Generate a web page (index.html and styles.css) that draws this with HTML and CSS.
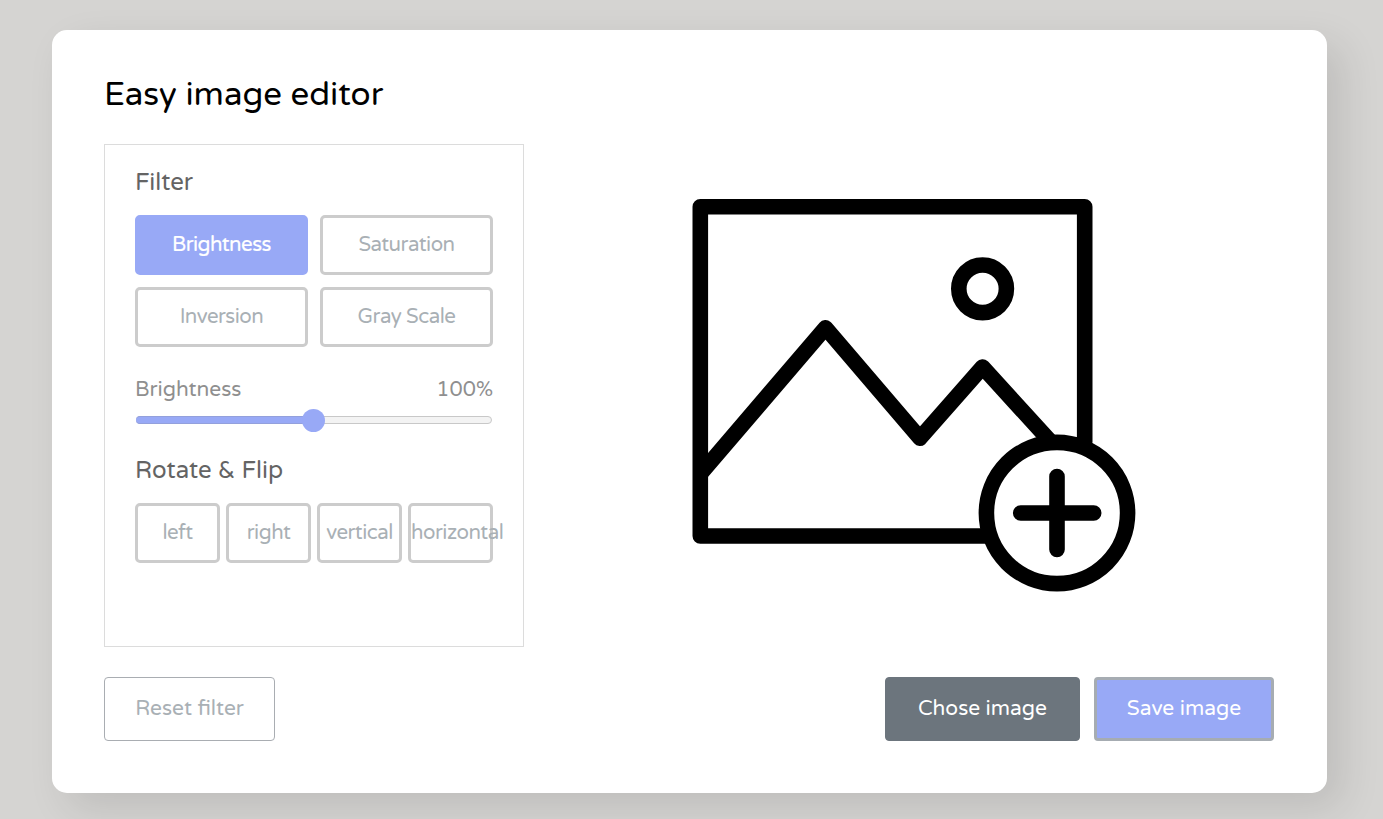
FILE: index.html
```html
<!DOCTYPE html>
<html lang="en">
<head>
<meta charset="utf-8">
<title>Easy image editor</title>
<link rel="stylesheet" href="styles.css">
</head>
<body>
<main class="container">
  <h2 class="title">Easy image editor</h2>
  <div class="wrapper">
    <section class="panel">
      <h3 class="label">Filter</h3>
      <div class="filters">
        <button class="option active">Brightness</button>
        <button class="option">Saturation</button>
        <button class="option">Inversion</button>
        <button class="option">Gray Scale</button>
      </div>
      <div class="slider">
        <div class="info"><span class="name">Brightness</span><span class="value">100%</span></div>
        <div class="track"><div class="fill"></div><div class="thumb"></div></div>
      </div>
      <h3 class="label rotate-label">Rotate &amp; Flip</h3>
      <div class="rotate">
        <button class="option">left</button>
        <button class="option">right</button>
        <button class="option">vertical</button>
        <button class="option horizontal">horizontal</button>
      </div>
    </section>
    <section class="preview">
      <svg class="picture" viewBox="692 198 444 395" width="444" height="395" fill="none" stroke="#000" stroke-width="15.6" stroke-linejoin="round" stroke-linecap="round">
        <path d="M1084.7 442V206.8H700.3V536H986"/>
        <path d="M700.3 474L825.5 327.8L920 438.2L982.6 367L1050 441" stroke-linecap="butt"/>
        <circle cx="982.6" cy="288.8" r="23.8"/>
        <circle cx="1057" cy="513" r="70.6" fill="#fff"/>
        <path d="M1020.7 513H1093.7M1057 476.5V549.5"/>
      </svg>
    </section>
  </div>
  <div class="controls">
    <button class="btn reset">Reset filter</button>
    <div class="row">
      <button class="btn choose">Chose image</button>
      <button class="btn save">Save image</button>
    </div>
  </div>
</main>
</body>
</html>
```
FILE: styles.css
```css
* { box-sizing: border-box; margin: 0; padding: 0; }
body {
  height: 819px;
  padding: 30px 56px 0 52px;
  overflow: hidden;
  background: #d5d4d2;
  font-family: "Varela Round", "Noto Sans", sans-serif;
}
button { font-family: inherit; }
.container {
  height: 763px;
  padding: 41px 53px 52px 52px;
  background: #fff;
  border-radius: 15px;
  box-shadow: 15px 15px 40px rgba(0, 0, 0, .11);
}
.title { height: 48px; line-height: 48px; font-size: 33px; font-weight: 400; color: #000; }
.wrapper { display: flex; height: 503px; margin-top: 25px; }
.panel { width: 420px; padding: 21px 30px; border: 1px solid #dcdcdc; }
.label { height: 34px; line-height: 34px; font-size: 24px; font-weight: 400; color: #646464; }
.filters { display: grid; grid-template-columns: 173px 173px; gap: 12px; margin-top: 15px; }
.option {
  height: 60px;
  padding: 0 0 2px;
  background: #fff;
  border: 3px solid #ccc;
  border-radius: 5px;
  color: #a9b0b5;
  font-size: 20.5px;
  letter-spacing: -.5px;
  white-space: nowrap;
}
.active { background: #98a9f6; border-color: #98a9f6; color: #fff; -webkit-text-stroke: .2px #fff; }
.slider { margin-top: 26px; }
.info { display: flex; justify-content: space-between; height: 34px; line-height: 34px; font-size: 21px; color: #8f8f8f; }
.track { position: relative; width: 356px; height: 8px; margin: 9px 0 0 1px; border: 1px solid #c8c8c8; border-radius: 4px; background: #f3f3f3; }
.fill { width: 178px; height: 8px; margin: -1px; border-radius: 4px 0 0 4px; background: #98a9f6; border-top: 1px solid #93a0dc; border-bottom: 1px solid #93a0dc; }
.thumb { position: absolute; left: 165px; top: -8.5px; width: 23px; height: 23px; border-radius: 50%; background: #98a9f6; }
.rotate-label { margin-top: 30px; }
.rotate { display: grid; grid-template-columns: repeat(4, 85px); gap: 6px; margin-top: 15px; }
.rotate .horizontal { text-align: left; }
.preview { display: flex; flex: 1; justify-content: center; align-items: center; padding-left: 30px; }
.picture { display: block; overflow: visible; filter: blur(.5px); }
.controls { display: flex; justify-content: space-between; margin-top: 30px; }
.row { display: flex; gap: 14px; }
.btn { height: 64px; padding-bottom: 2px; border-radius: 4px; font-size: 21px; white-space: nowrap; }
.reset { width: 171px; background: #fff; border: 1px solid #a9adb2; color: #a9b0b5; }
.choose { width: 195px; background: #6c757d; border: 1px solid #6c757d; color: #fff; }
.save { width: 180px; background: #98a9f6; border: 3px solid #a6acb2; color: #fff; }
```
